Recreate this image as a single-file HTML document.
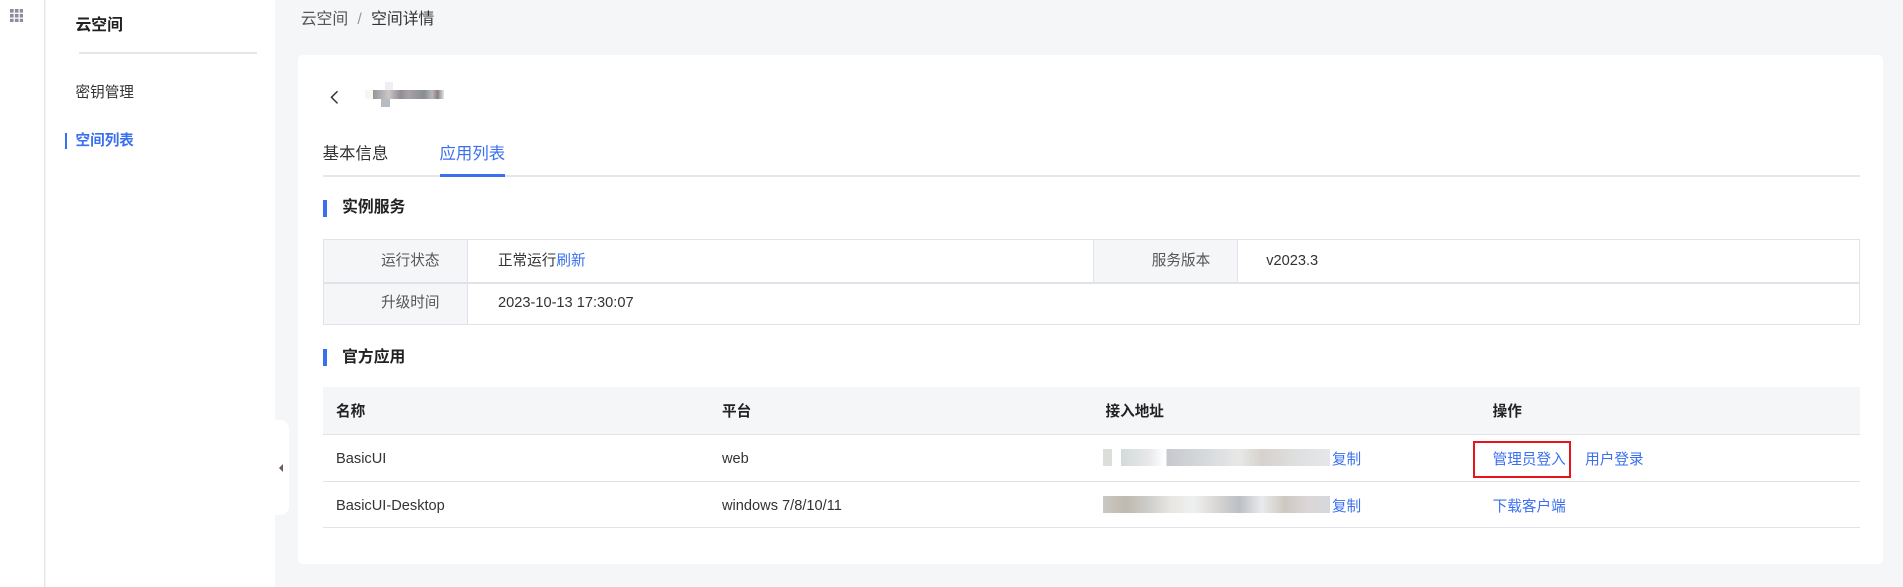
<!DOCTYPE html>
<html><head><meta charset="utf-8"><style>
*{margin:0;padding:0;box-sizing:border-box}
html,body{width:1903px;height:587px;overflow:hidden;background:#f5f6f8}
#z{zoom:1.2175;position:relative;width:1563px;height:482px;font-family:"Liberation Sans","Noto Sans CJK SC",sans-serif;color:#333;font-size:12px;line-height:17px}
.a{position:absolute;white-space:nowrap}
.blue{color:#3a6ff0}
.px{position:absolute;height:7px}
</style></head><body><div id="z">
<div class="a" style="left:0;top:0;width:37px;height:482px;background:#fff;border-right:1px solid #e4e6ec"></div>
<svg class="a" style="left:8px;top:7px" width="11" height="11"><g fill="#8a8e99"><rect x="0" y="0" width="3" height="3"/><rect x="4" y="0" width="3" height="3"/><rect x="8" y="0" width="3" height="3"/><rect x="0" y="4" width="3" height="3"/><rect x="4" y="4" width="3" height="3"/><rect x="8" y="4" width="3" height="3"/><rect x="0" y="8" width="3" height="3"/><rect x="4" y="8" width="3" height="3"/><rect x="8" y="8" width="3" height="3"/></g></svg>
<div class="a" style="left:38px;top:0;width:188px;height:482px;background:#fff"></div>
<div class="a" style="left:62px;top:13px;font-size:13px;font-weight:bold;color:#222">云空间</div>
<div class="a" style="left:65px;top:43px;width:146px;height:1px;background:#e4e6ec"></div>
<div class="a" style="left:62px;top:68px">密钥管理</div>
<div class="a" style="left:53px;top:109px;width:2px;height:13px;background:#3a6ff0"></div>
<div class="a blue" style="left:62px;top:108px;font-weight:bold">空间列表</div>
<div class="a" style="left:222px;top:345px;width:15px;height:78px;background:#fff;border-radius:0 7px 7px 0"></div>
<div class="a" style="left:229px;top:381px;width:0;height:0;border-top:4px solid transparent;border-bottom:4px solid transparent;border-right:4px solid #6b5b52"></div>
<div class="a" style="left:247px;top:8px;font-size:13px;color:#555">云空间 <span style="color:#999;margin:0 4px">/</span> <span style="color:#333">空间详情</span></div>
<div class="a" style="left:245px;top:45px;width:1302px;height:418px;background:#fff;border-radius:4px"></div>
<svg class="a" style="left:270px;top:74px" width="10" height="12"><path d="M7 1 L2 6 L7 11" stroke="#333" stroke-width="1.2" fill="none"/></svg>
<div class="px" style="left:300px;top:74px;width:65px;background:linear-gradient(90deg,#f8f6f0 0,#f8f6f0 10%,#95959a 10%,#cbc6c6 30%,#8e8d95 45%,#a9a0a8 55%,#95989e 65%,#8a8c92 75%,#b5b8bb 85%,#8e7f78 92%,#dfe6ef 100%)"></div>
<div class="px" style="left:313px;top:81px;width:7px;background:#b6bcc2"></div>
<div class="px" style="left:316px;top:67px;width:7px;background:#efeef2"></div>
<div class="a" style="left:265px;top:118px;font-size:13.5px">基本信息</div>
<div class="a blue" style="left:361px;top:118px;font-size:13.5px">应用列表</div>
<div class="a" style="left:265px;top:144px;width:1263px;height:1px;background:#e4e6ec"></div>
<div class="a" style="left:361px;top:143px;width:54px;height:2px;background:#3a6ff0"></div>
<div class="a" style="left:265px;top:164px;width:4px;height:14px;background:#3a6ff0"></div>
<div class="a" style="left:281px;top:163px;font-size:13px;font-weight:bold;color:#222">实例服务</div>
<div class="a" style="left:265px;top:196px;width:1263px;height:71px;border:1px solid #e2e3ea"></div>
<div class="a" style="left:266px;top:197px;width:118px;height:69px;background:#f5f6f8;border-right:1px solid #e2e3ea"></div>
<div class="a" style="left:898px;top:197px;width:119px;height:35px;background:#f5f6f8;border-left:1px solid #e2e3ea;border-right:1px solid #e2e3ea"></div>
<div class="a" style="left:266px;top:232px;width:1262px;height:1px;background:#e2e3ea"></div>
<div class="a" style="left:313px;top:206px;color:#555">运行状态</div>
<div class="a" style="left:313px;top:241px;color:#555">升级时间</div>
<div class="a" style="left:409px;top:206px">正常运行<span class="blue">刷新</span></div>
<div class="a" style="left:409px;top:241px">2023-10-13 17:30:07</div>
<div class="a" style="left:946px;top:206px;color:#555">服务版本</div>
<div class="a" style="left:1040px;top:206px">v2023.3</div>
<div class="a" style="left:265px;top:287px;width:4px;height:14px;background:#3a6ff0"></div>
<div class="a" style="left:281px;top:286px;font-size:13px;font-weight:bold;color:#222">官方应用</div>
<div class="a" style="left:265px;top:318px;width:1263px;height:39px;background:#f5f6f8;border-bottom:1px solid #e2e3ea"></div>
<div class="a" style="left:265px;top:395px;width:1263px;height:1px;background:#e2e3ea"></div>
<div class="a" style="left:265px;top:433px;width:1263px;height:1px;background:#e2e3ea"></div>
<div class="a" style="left:276px;top:330px;font-weight:bold;color:#222">名称</div>
<div class="a" style="left:593px;top:330px;font-weight:bold;color:#222">平台</div>
<div class="a" style="left:908px;top:330px;font-weight:bold;color:#222">接入地址</div>
<div class="a" style="left:1226px;top:330px;font-weight:bold;color:#222">操作</div>
<div class="a" style="left:276px;top:369px">BasicUI</div>
<div class="a" style="left:593px;top:369px">web</div>
<div class="a" style="left:276px;top:407px">BasicUI-Desktop</div>
<div class="a" style="left:593px;top:407px">windows 7/8/10/11</div>
<div class="px" style="left:906px;top:369px;width:186px;height:14px;background:linear-gradient(90deg,#d8dad6 0,#d8dad6 4%,#fff 4%,#fff 8%,#cfd6d6 8%,#e4e5e7 20%,#fff 27%,#fff 28%,#c0c2c8 28%,#d2d5d8 45%,#e5e6e4 60%,#d2ccc8 70%,#dadcdc 85%,#e4e4e8 100%);opacity:.9"></div>
<div class="px" style="left:906px;top:407px;width:186px;height:14px;background:linear-gradient(90deg,#c4c3bc 0,#b8b2a6 10%,#c8c8c4 20%,#e6e4e0 30%,#eceeee 40%,#d4d2d0 50%,#b4b8be 60%,#e6e8ea 70%,#c8c2ba 80%,#d8d2d4 90%,#d0d4d8 100%);opacity:.9"></div>
<div class="a blue" style="left:1094px;top:370px">复制</div>
<div class="a blue" style="left:1094px;top:408px">复制</div>
<div class="a" style="left:1210px;top:362px;width:80px;height:31px;border:2px solid #e8141c"></div>
<div class="a blue" style="left:1226px;top:370px">管理员登入</div>
<div class="a blue" style="left:1302px;top:370px">用户登录</div>
<div class="a blue" style="left:1226px;top:408px">下载客户端</div>
</div></body></html>
